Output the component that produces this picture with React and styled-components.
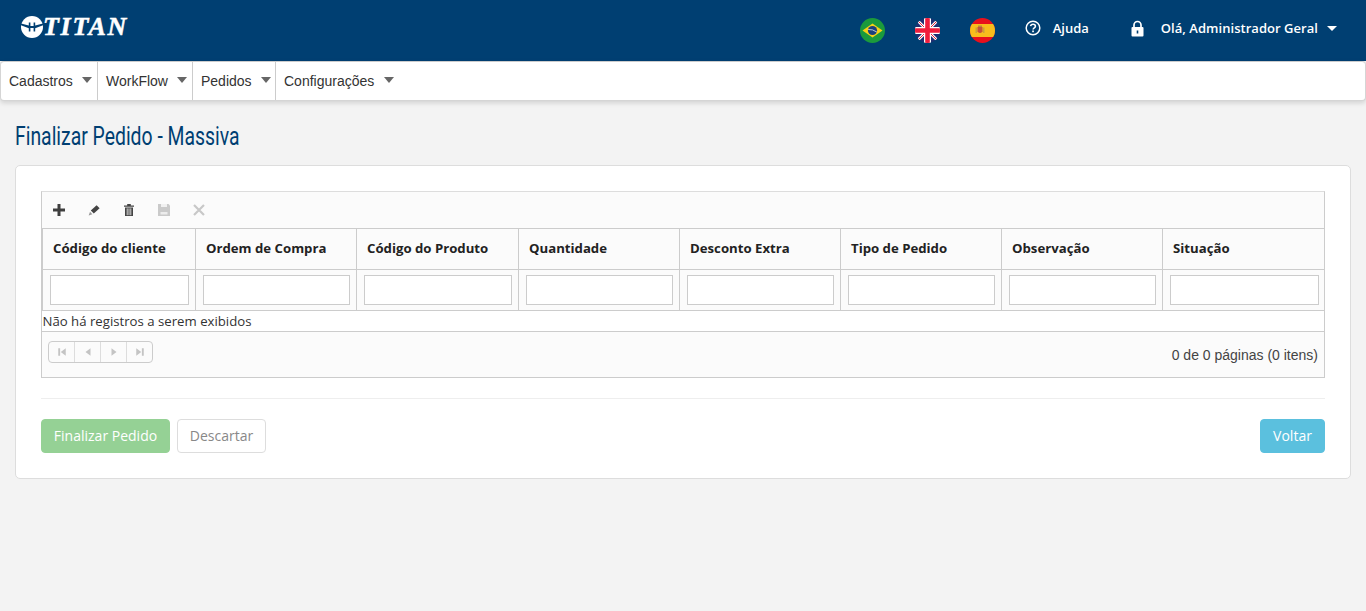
import styled, { createGlobalStyle } from "styled-components";

const GlobalStyle = createGlobalStyle`
  html, body {
    margin: 0;
    padding: 0;
    background: #f3f3f3;
    color: #333;
    font-family: "Liberation Sans", Arial, sans-serif;
  }
  * {
    box-sizing: border-box;
  }
`;

const Page = styled.div`
  min-height: 611px;
  background: #f3f3f3;
`;

const TopBar = styled.header`
  height: 61px;
  background: #003f72;
  display: flex;
  align-items: center;
  justify-content: space-between;
  padding: 0 29px 0 21px;
`;

const Logo = styled.div`
  display: flex;
  align-items: center;
  height: 24px;
  margin-top: -7px;
`;

const LogoText = styled.span`
  font-family: "Liberation Serif", serif;
  font-weight: 700;
  font-style: italic;
  font-size: 26px;
  letter-spacing: 1.7px;
  color: #fff;
  -webkit-text-stroke: 0.5px #fff;
`;

const TopActions = styled.div`
  display: flex;
  align-items: center;
  color: #fff;
  font-family: "Open Sans", sans-serif;
  font-size: 13px;
  font-weight: 600;
`;

const Flag = styled.svg`
  width: 25px;
  height: 25px;
  margin-right: 30px;
  display: block;
`;

const HelpLink = styled.div`
  display: flex;
  align-items: center;
  gap: 12px;
  margin-right: 42px;
  margin-top: -5px;
`;

const UserLink = styled.div`
  display: flex;
  align-items: center;
  margin-top: -5px;
  letter-spacing: 0.04px;
`;

const LockIcon = styled.svg`
  width: 13px;
  height: 17px;
  margin-right: 17px;
`;

const UserCaret = styled.span`
  width: 0;
  height: 0;
  margin-left: 9px;
  border-left: 5px solid transparent;
  border-right: 5px solid transparent;
  border-top: 5px solid #fff;
`;

const MenuBar = styled.nav`
  height: 40px;
  background: #fff;
  border: 1px solid #d5d5d5;
  border-top-color: #ccc;
  border-radius: 4px;
  box-shadow: 0 2px 5px rgba(0, 0, 0, 0.14);
  display: flex;
`;

const MenuItem = styled.div`
  display: flex;
  align-items: center;
  width: ${(p) => p.$width}px;
  padding-left: 8px;
  font-size: 14px;
  color: #333;
  border-right: ${(p) => (p.$last ? "none" : "1px solid #ccc")};
`;

const MenuCaret = styled.span`
  width: 0;
  height: 0;
  margin-left: 9.5px;
  margin-top: -3px;
  border-left: 5px solid transparent;
  border-right: 5px solid transparent;
  border-top: 6px solid #666;
`;

const Title = styled.h1`
  margin: 0;
  padding: 21px 0 0 15px;
  height: 64px;
  font-family: "Roboto", sans-serif;
  font-weight: 400;
  font-size: 25px;
  line-height: 30px;
  color: #003f72;
`;

const TitleInner = styled.span`
  display: inline-block;
  transform: scaleX(0.775);
  transform-origin: left center;
  white-space: nowrap;
`;

const Card = styled.section`
  margin: 0 15px;
  height: 314px;
  background: #fff;
  border: 1px solid #ddd;
  border-radius: 5px;
  padding: 25px;
`;

const Grid = styled.div`
  border: 1px solid #ccc;
  border-top-color: #ddd;
  height: 187px;
`;

const Toolbar = styled.div`
  height: 37px;
  background: #fbfbfb;
  border-bottom: 1px solid #ccc;
  display: flex;
  align-items: center;
  padding: 0 0 0 10px;
  gap: 21px;
`;

const ToolIcon = styled.svg`
  width: 14px;
  height: 14px;
  display: block;
`;

const Row = styled.div`
  display: grid;
  grid-template-columns: 153px 161px 162px 161px 161px 161px 161px 162px;
  border-left: 1px solid #ccc;
  background: #fbfbfb;
  height: 41px;
  border-bottom: 1px solid #ccc;
`;

const HeadCell = styled.div`
  display: flex;
  align-items: center;
  padding: 0 0 2px 10px;
  font-family: "Open Sans", sans-serif;
  font-size: 13.2px;
  font-weight: 700;
  color: #222;
  border-right: 1px solid #ccc;
  &:last-child {
    border-right: none;
  }
`;

const FilterCell = styled.div`
  display: flex;
  align-items: center;
  padding: 0 6px 0 7px;
  border-right: 1px solid #ccc;
  &:last-child {
    border-right: none;
  }
`;

const FilterInput = styled.input`
  width: 100%;
  height: 30px;
  border: 1px solid #ccc;
  background: #fff;
  outline: 0;
  padding: 0 6px;
`;

const EmptyRow = styled.div`
  height: 21px;
  border-bottom: 1px solid #ccc;
  background: #fff;
  font-family: "Open Sans", sans-serif;
  font-size: 13.2px;
  line-height: 20px;
  color: #333;
  padding-left: 0.5px;
`;

const Pager = styled.div`
  height: 45px;
  background: #fbfbfb;
  display: flex;
  justify-content: space-between;
  padding: 9px 6px 0 6px;
`;

const PagerButtons = styled.div`
  display: flex;
  height: 22px;
  width: 105px;
  border: 1px solid #ccc;
  border-radius: 4px;
  background: #fbfbfb;
`;

const PagerButton = styled.div`
  flex: 1;
  display: flex;
  align-items: center;
  justify-content: center;
  border-right: 1px solid #ddd;
  &:last-child {
    border-right: none;
  }
`;

const PagerInfo = styled.div`
  font-size: 14px;
  color: #444;
  padding-top: 6px;
`;

const Divider = styled.hr`
  margin: 20px 0;
  border: 0;
  border-top: 1px solid #eee;
`;

const Actions = styled.div`
  display: flex;
  gap: 7px;
`;

const Button = styled.button`
  width: ${(p) => p.$width}px;
  height: 34px;
  padding: 0 0 2px;
  border-radius: 4px;
  border: 1px solid ${(p) => p.$border};
  background: ${(p) => p.$bg};
  color: ${(p) => p.$color};
  font-family: "Open Sans", sans-serif;
  font-size: 14px;
  margin-left: ${(p) => (p.$right ? "auto" : "0")};
`;

const columns = [
  "Código do cliente",
  "Ordem de Compra",
  "Código do Produto",
  "Quantidade",
  "Desconto Extra",
  "Tipo de Pedido",
  "Observação",
  "Situação",
];

const menus = [
  { label: "Cadastros", width: 97 },
  { label: "WorkFlow", width: 95 },
  { label: "Pedidos", width: 83 },
  { label: "Configurações", width: 130, last: true },
];

const TitanMark = () => (
  <svg width="22" height="24" viewBox="0 0 22 24">
    <circle cx="11" cy="12" r="11" fill="#fff" />
    <path
      d="M0 8.6 L7.8 10.6 L7.8 7.6 L9.4 7.6 L9.4 11 L12.6 11 L12.6 7.6 L14.2 7.6 L14.2 10.6 L22 8.6 L22 10.2 L14.2 13.2 L14.2 16.4 L12.6 16.4 L12.6 13 L9.4 13 L9.4 16.4 L7.8 16.4 L7.8 13.2 L0 10.2 Z"
      fill="#003f72"
    />
  </svg>
);

const BrazilFlag = () => (
  <Flag viewBox="0 0 25 25">
    <circle cx="12.5" cy="12.5" r="12.5" fill="#1b9a3c" />
    <path d="M2.5 12.5 L12.5 5.5 L22.5 12.5 L12.5 19.5 Z" fill="#f7d116" />
    <circle cx="12.5" cy="12.5" r="4.6" fill="#1d3f7c" />
    <path d="M8.2 11.5 Q12.5 11 16.8 14" stroke="#dfe6ee" strokeWidth="0.8" fill="none" />
  </Flag>
);

const UkFlag = () => (
  <Flag viewBox="0 0 25 25">
    <defs>
      <clipPath id="ukClip">
        <circle cx="12.5" cy="12.5" r="12.5" />
      </clipPath>
    </defs>
    <g clipPath="url(#ukClip)">
      <rect width="25" height="25" fill="#1f2f73" />
      <path d="M0 0 L25 25 M25 0 L0 25" stroke="#fff" strokeWidth="2.8" />
      <path d="M0 0 L25 25 M25 0 L0 25" stroke="#e8203a" strokeWidth="1" />
      <path d="M12.5 0 V25 M0 12.5 H25" stroke="#fff" strokeWidth="7" />
      <path d="M12.5 0 V25 M0 12.5 H25" stroke="#f01c3c" strokeWidth="4.6" />
    </g>
  </Flag>
);

const SpainFlag = () => (
  <Flag viewBox="0 0 25 25">
    <defs>
      <clipPath id="esClip">
        <circle cx="12.5" cy="12.5" r="12.5" />
      </clipPath>
    </defs>
    <g clipPath="url(#esClip)">
      <rect width="25" height="25" fill="#e8101c" />
      <rect y="6" width="25" height="13" fill="#f8bd1c" />
      <rect x="5.5" y="9.5" width="1.5" height="5.5" fill="#c9a13a" />
      <path d="M7.5 9 H12.5 V13.5 Q10 16.5 7.5 13.5 Z" fill="#c4513c" />
      <rect x="8" y="7.5" width="4" height="1.5" fill="#b98a3a" />
      <rect x="13" y="9.5" width="1.5" height="5.5" fill="#c9a13a" />
    </g>
  </Flag>
);

const HelpIcon = () => (
  <svg width="16" height="16" viewBox="0 0 16 16">
    <circle cx="8" cy="8" r="6.8" fill="none" stroke="#fff" strokeWidth="1.5" />
    <path
      d="M5.6 6.2 C5.8 4.8 6.8 4.2 8 4.2 C9.4 4.2 10.4 5 10.4 6.2 C10.4 7.8 8.1 7.9 8.1 9.6"
      fill="none"
      stroke="#fff"
      strokeWidth="1.6"
    />
    <rect x="7.2" y="10.5" width="1.7" height="1.7" fill="#fff" />
  </svg>
);

const Lock = () => (
  <LockIcon viewBox="0 0 13 17">
    <path d="M3 8 V5 a3.5 3.5 0 0 1 7 0 V8" fill="none" stroke="#fff" strokeWidth="1.7" />
    <rect x="0.5" y="7" width="12" height="9.5" rx="1" fill="#fff" />
    <rect x="5.7" y="10.5" width="1.6" height="3" fill="#003f72" />
  </LockIcon>
);

const PlusTool = () => (
  <ToolIcon viewBox="0 0 14 14">
    <path d="M7 1 V13 M1 7 H13" stroke="#3f3f3f" strokeWidth="3" />
  </ToolIcon>
);

const PencilTool = () => (
  <ToolIcon viewBox="0 0 14 14">
    <path d="M3.8 7.4 L9.6 2.2 L12.6 5.2 L6.8 10.6 Z" fill="#444" />
    <path d="M3 8.8 L5.4 11.2 L1.6 12.6 Z" fill="#999" />
  </ToolIcon>
);

const TrashTool = () => (
  <ToolIcon viewBox="0 0 14 14">
    <path
      d="M2 2.6 H12 V3.8 H2 Z M5.2 1 H8.8 V2.6 H5.2 Z M3 4.6 H11 V13 H3 Z"
      fill="#444"
    />
    <path d="M5.2 5.4 V12.2 M7 5.4 V12.2 M8.8 5.4 V12.2" stroke="#fbfbfb" strokeWidth="0.8" />
  </ToolIcon>
);

const SaveTool = () => (
  <ToolIcon viewBox="0 0 14 14">
    <path d="M1 1 H11.5 L13 2.5 V13 H1 Z" fill="#cacaca" />
    <rect x="4" y="1" width="6" height="3" fill="#f1f1f1" />
    <rect x="3.5" y="9" width="7" height="2.5" fill="#ececec" />
  </ToolIcon>
);

const CloseTool = () => (
  <ToolIcon viewBox="0 0 14 14">
    <path d="M2 2 L12 12 M12 2 L2 12" stroke="#c8c8c8" strokeWidth="2.2" />
  </ToolIcon>
);

const PagerGlyph = ({ d }) => (
  <svg width="10" height="10" viewBox="0 0 8 8">
    <path d={d} fill="#c4c4c4" />
  </svg>
);

const pagerIcons = [
  "M1 1 H2.5 V7 H1 Z M7 1 V7 L3 4 Z",
  "M6 1 V7 L2 4 Z",
  "M2 1 V7 L6 4 Z",
  "M1 1 V7 L5 4 Z M5.5 1 H7 V7 H5.5 Z",
];

const App = () => {
  return (
    <Page>
      <GlobalStyle />
      <TopBar>
        <Logo>
          <TitanMark />
          <LogoText>TITAN</LogoText>
        </Logo>
        <TopActions>
          <BrazilFlag />
          <UkFlag />
          <SpainFlag />
          <HelpLink>
            <HelpIcon />
            <span>Ajuda</span>
          </HelpLink>
          <UserLink>
            <Lock />
            <span>Olá, Administrador Geral</span>
            <UserCaret />
          </UserLink>
        </TopActions>
      </TopBar>
      <MenuBar>
        {menus.map((m) => (
          <MenuItem key={m.label} $width={m.width} $last={m.last}>
            {m.label}
            <MenuCaret />
          </MenuItem>
        ))}
      </MenuBar>
      <Title>
        <TitleInner>Finalizar Pedido - Massiva</TitleInner>
      </Title>
      <Card>
        <Grid>
          <Toolbar>
            <PlusTool />
            <PencilTool />
            <TrashTool />
            <SaveTool />
            <CloseTool />
          </Toolbar>
          <Row>
            {columns.map((c) => (
              <HeadCell key={c}>{c}</HeadCell>
            ))}
          </Row>
          <Row>
            {columns.map((c) => (
              <FilterCell key={c}>
                <FilterInput />
              </FilterCell>
            ))}
          </Row>
          <EmptyRow>Não há registros a serem exibidos</EmptyRow>
          <Pager>
            <PagerButtons>
              {pagerIcons.map((d) => (
                <PagerButton key={d}>
                  <PagerGlyph d={d} />
                </PagerButton>
              ))}
            </PagerButtons>
            <PagerInfo>0 de 0 páginas (0 itens)</PagerInfo>
          </Pager>
        </Grid>
        <Divider />
        <Actions>
          <Button $width={129} $bg="#95d195" $border="#95d195" $color="#fff">
            Finalizar Pedido
          </Button>
          <Button $width={89} $bg="#fff" $border="#ddd" $color="#888">
            Descartar
          </Button>
          <Button $width={65} $bg="#5bc0de" $border="#5bc0de" $color="#fff" $right>
            Voltar
          </Button>
        </Actions>
      </Card>
    </Page>
  );
};

export default App;
